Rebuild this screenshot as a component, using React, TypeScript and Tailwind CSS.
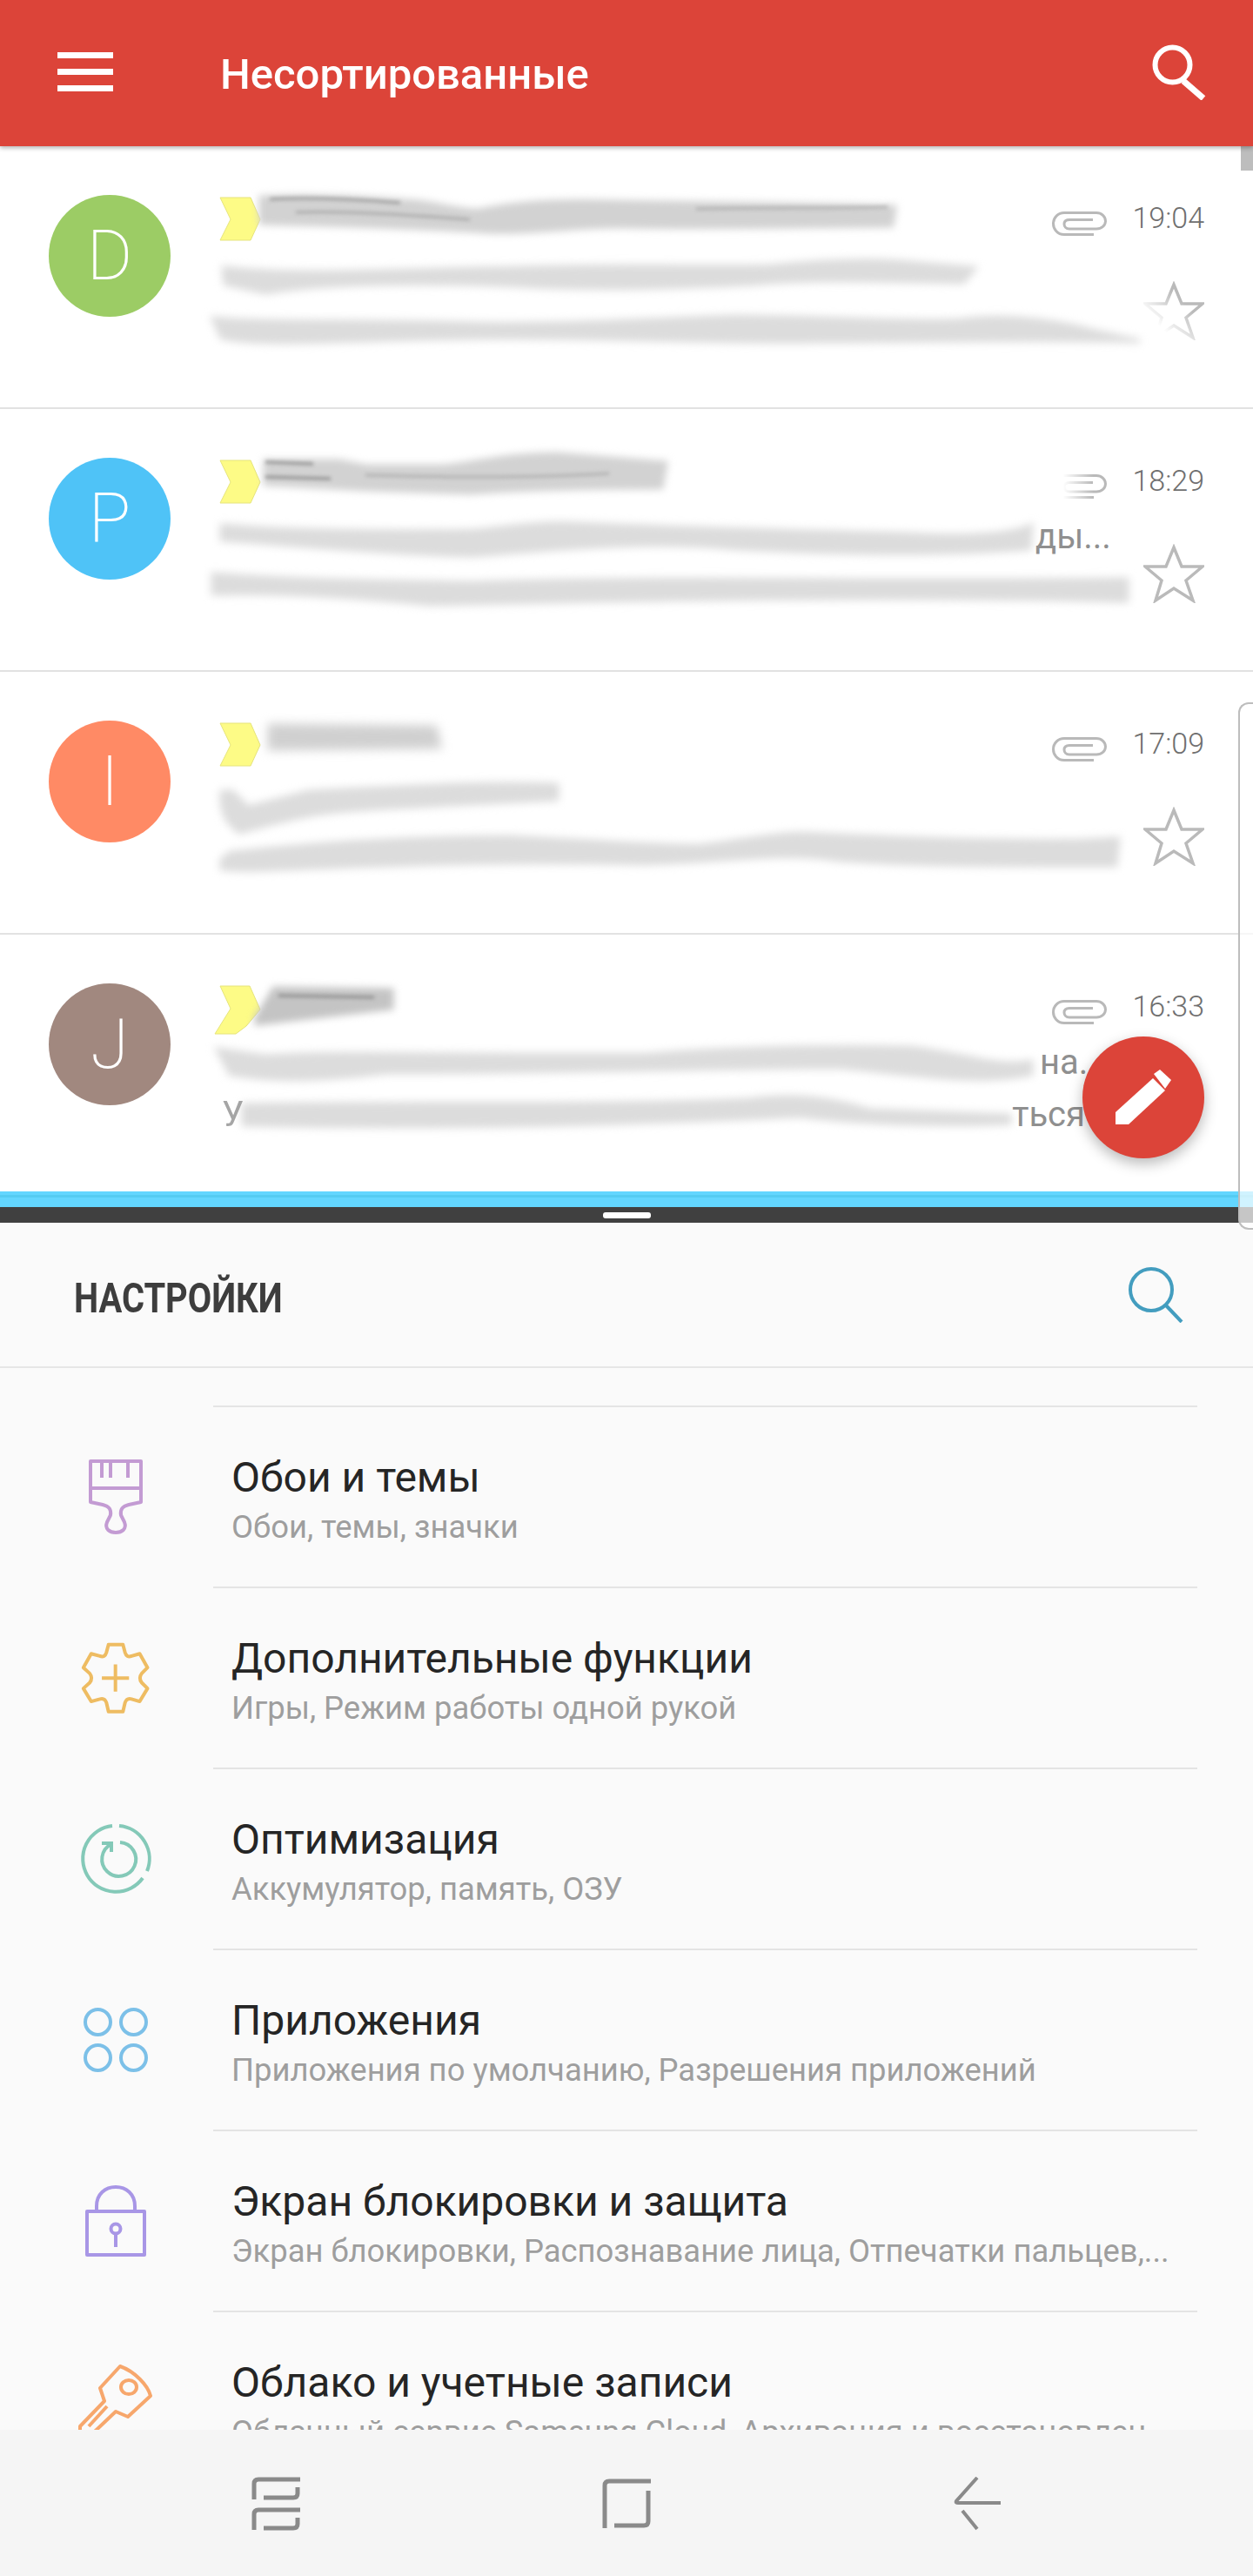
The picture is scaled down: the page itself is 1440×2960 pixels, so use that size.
import type { ReactNode } from 'react';

type Stroke = { d: string; c?: string; w?: number };

function Smudge({ w, h, d, fill = '#dcdcdc', blur = 'blur-[5px]', lines = [] }: { w: number; h: number; d: string; fill?: string; blur?: string; lines?: Stroke[] }) {
  return (
    <svg width={w} height={h} viewBox={`0 0 ${w} ${h}`} className="shrink-0 overflow-visible">
      <path d={d} fill={fill} stroke={fill} strokeWidth="5" className={blur} />
      {lines.map((l, i) => (
        <path key={i} d={l.d} fill="none" stroke={l.c ?? '#a8a8a8'} strokeWidth={l.w ?? 3} className="blur-[2px]" />
      ))}
    </svg>
  );
}

function Flag({ skewed }: { skewed?: boolean }) {
  return (
    <svg width="47" height="58" viewBox="0 0 47 58" className="ml-2 mt-[3px] shrink-0 overflow-visible">
      {skewed ? (
        <path d="M0 0H34L46 27L30 46L18 55L-6 55L12 26Z" fill="#fdfb86" stroke="#e6e47c" strokeWidth="1" />
      ) : (
        <path d="M0 0H35L46 25L35 49H0L12 25Z" fill="#fdfb86" stroke="#e6e47c" strokeWidth="1" />
      )}
    </svg>
  );
}

function Clip({ faded }: { faded?: boolean }) {
  return (
    <svg width="63" height="28" viewBox="0 0 63 28" fill="none" stroke="#b9b9b9" strokeWidth="3" className={faded ? '[mask-image:linear-gradient(to_right,transparent_20%,black_75%)]' : ''}>
      <path d="M48 26.5H14C6 26.5 1.5 20 1.5 14C1.5 7 7 1.5 14 1.5H51C57 1.5 61.5 6 61.5 11C61.5 16 57 20 51 20H20C16 20 14 17 14 14.5C14 11.5 16 9.5 20 9.5H47" />
    </svg>
  );
}

function Star({ faded }: { faded?: boolean }) {
  return (
    <svg width="70" height="68" viewBox="0 0 70 68" fill="none" stroke="#bababa" strokeWidth="3.5" strokeLinejoin="miter" className={faded ? '[mask-image:linear-gradient(to_top_right,transparent_25%,black_65%)]' : ''}>
      <path d="M35 4L44 26L68 26L49 42L57 65L35 51L14 65L21 42L2 26L26 26Z" />
    </svg>
  );
}

function Mail(props: { letter: string; color: string; time: string; line1: ReactNode; line2: ReactNode; line3: ReactNode; noStar?: boolean; fadedClip?: boolean; fadedStar?: boolean; last?: boolean }) {
  return (
    <div className={`flex shrink-0 pl-14 pt-14 ${props.last ? 'h-[295px]' : 'h-[302px] border-b-2 border-[#e2e2e2]'}`}>
      <div className={`flex h-[140px] w-[140px] shrink-0 items-center justify-center rounded-full text-[80px] font-extralight leading-none text-white ${props.color}`}>{props.letter}</div>
      <div className="ml-[49px] flex w-[1139px]">
        <div className="w-[964px] shrink-0">
          <div className="flex h-[70px] items-start">{props.line1}</div>
          <div className="flex h-[60px] items-start">{props.line2}</div>
          <div className="flex h-[60px] items-start">{props.line3}</div>
        </div>
        <div className="relative flex w-[175px] shrink-0 flex-col items-end">
          <div className="mt-[15px] flex h-[32px] w-full items-end justify-between">
            <Clip faded={props.fadedClip} />
            <span className="text-[34px] font-light leading-[34px] text-[#6f6f6f] -translate-y-[4px]">{props.time}</span>
          </div>
          {!props.noStar && <div className="mt-[52px]"><Star faded={props.fadedStar} /></div>}
        </div>
      </div>
    </div>
  );
}

const snippet = 'text-[40px] font-normal leading-[60px] text-[#8f8f8f] -translate-y-[9px] whitespace-nowrap';

function BrushIcon() {
  return (
    <svg width="62" height="86" viewBox="0 0 62 86" fill="none" stroke="#c39bd3" strokeWidth="4" strokeLinejoin="round">
      <path d="M2 2H60V49L46 52C38 54 36 58 37 64L41 72C44 80 38 84 31 84C24 84 18 80 21 72L25 64C26 58 24 54 16 52L2 49Z" />
      <path d="M2 33H60M15 2V21M25 2V21M45 2V21" />
    </svg>
  );
}

function GearIcon() {
  return (
    <svg width="80" height="83" viewBox="100 740 240 250" fill="none" stroke="#eebc62" strokeWidth="12" strokeLinejoin="round">
      <path d="M195 748H245L252 775Q258 795 275 788L303 780L330 828L310 848Q298 864 310 880L330 900L303 945L275 937Q258 932 252 950L245 980H195L188 950Q182 932 165 937L135 945L108 900L130 880Q142 864 130 848L108 828L135 780L165 788Q182 795 188 775Z" />
      <path d="M172 864H266M219 817V911" />
    </svg>
  );
}

function OptimizeIcon() {
  return (
    <svg width="84" height="84" viewBox="-42 -42 84 84" fill="none" stroke="#84c9b8" strokeWidth="4">
      <path d="M4 -38A38 38 0 0 1 36 14" />
      <path d="M31 22A38 38 0 1 1 -4 -38" />
      <path d="M5 -19A19.5 19.5 0 1 1 -5 -17" />
      <path d="M-16 -18H-5V-8" />
    </svg>
  );
}

function AppsIcon() {
  return (
    <svg width="74" height="74" viewBox="0 0 74 74" fill="none" stroke="#7cc0e8" strokeWidth="4">
      <circle cx="16.5" cy="16.5" r="14.5" />
      <circle cx="57.5" cy="16.5" r="14.5" />
      <circle cx="16.5" cy="57.5" r="14.5" />
      <circle cx="57.5" cy="57.5" r="14.5" />
    </svg>
  );
}

function LockIcon() {
  return (
    <svg width="70" height="82" viewBox="0 0 70 82" fill="none" stroke="#a896e6" strokeWidth="4" strokeLinejoin="round">
      <rect x="2" y="30" width="66" height="50" />
      <path d="M13 30V24C13 10 23 2 35 2C47 2 57 10 57 24V30" />
      <circle cx="35" cy="50" r="5.5" />
      <path d="M35 55V71" />
    </svg>
  );
}

function KeyIcon() {
  return (
    <svg width="86" height="88" viewBox="90 2717 86 88" fill="none" stroke="#f7a76c" strokeWidth="4" strokeLinejoin="round">
      <path d="M138 2720L115 2745L120 2760L92 2789V2800L100 2803L113 2791L133 2772L147 2778L173 2754C170 2742 155 2726 138 2720Z" />
      <path d="M123 2766L102 2789" />
      <ellipse cx="148" cy="2744" rx="9" ry="8" />
    </svg>
  );
}

const settings = [
  { icon: <BrushIcon />, title: 'Обои и темы', sub: 'Обои, темы, значки' },
  { icon: <GearIcon />, title: 'Дополнительные функции', sub: 'Игры, Режим работы одной рукой' },
  { icon: <OptimizeIcon />, title: 'Оптимизация', sub: 'Аккумулятор, память, ОЗУ' },
  { icon: <AppsIcon />, title: 'Приложения', sub: 'Приложения по умолчанию, Разрешения приложений' },
  { icon: <LockIcon />, title: 'Экран блокировки и защита', sub: 'Экран блокировки, Распознавание лица, Отпечатки пальцев,...' },
  { icon: <KeyIcon />, title: 'Облако и учетные записи', sub: 'Облачный сервис Samsung Cloud, Архивация и восстановлен' },
];

export default function App() {
  return (
    <div className="relative flex h-[2960px] w-[1440px] flex-col overflow-hidden bg-white font-['Roboto',sans-serif]">
      {/* mail app */}
      <header className="z-10 flex h-[168px] shrink-0 items-start bg-[#dc4439] shadow-[0_2px_5px_rgba(0,0,0,0.3)]">
        <div className="ml-[66px] mt-[60px] flex h-[45px] w-[64px] flex-col justify-between">
          <div className="h-[7px] bg-white" />
          <div className="h-[7px] bg-white" />
          <div className="h-[7px] bg-white" />
        </div>
        <h1 className="ml-[123px] mt-[59px] text-[49px] font-medium leading-[54px] text-white">Несортированные</h1>
        <svg width="64" height="64" viewBox="0 0 64 64" fill="none" stroke="#fff" className="ml-auto mr-[53px] mt-[51px]">
          <circle cx="24.5" cy="23.5" r="20" strokeWidth="6" />
          <path d="M37 42L60 62" strokeWidth="7" />
        </svg>
      </header>

      <div className="relative flex h-[1201px] shrink-0 flex-col overflow-hidden">
        <div className="absolute right-0 top-0 h-[28px] w-[14px] bg-[#bdbdbd]" />
        <Mail
          letter="D"
          color="bg-[#9ccc65]"
          time="19:04"
          fadedStar
          line1={<><Flag /><Smudge w={728} h={50} fill="#d2d2d2" blur="blur-[4px]" d="M0 3C60 0 120 3 180 8C210 12 230 18 250 18C290 10 330 6 400 8C500 10 600 10 728 14L725 35C600 36 500 38 420 36C360 35 320 44 260 42C200 38 120 35 0 32Z" lines={[{ d: 'M10 5C60 2 110 5 160 9', c: '#9a9a9a' }, { d: 'M40 20C100 18 180 24 240 28', c: '#aaaaaa' }, { d: 'M500 16C580 14 650 16 720 14', c: '#b0b0b0' }]} /></>}
          line2={<Smudge w={875} h={44} d="M12 14C100 24 200 16 350 14C480 10 560 14 640 12C700 6 760 4 800 8L875 14L862 30C760 28 680 26 620 32C500 38 420 38 350 34C250 30 130 30 60 42L14 32Z" />}
          line3={<Smudge w={1065} h={44} d="M0 12C60 18 160 14 300 18C400 20 480 14 600 10C700 10 800 18 860 14C900 8 960 12 1010 26L1065 38C950 34 850 38 700 38C550 40 450 32 300 34C150 36 60 44 10 34Z" />}
        />
        <Mail
          letter="P"
          color="bg-[#4fc3f7]"
          time="18:29"
          fadedClip
          line1={<><Flag /><Smudge w={465} h={50} fill="#d2d2d2" blur="blur-[4px]" d="M5 4H90L120 10H210C250 6 280 -4 340 -4L465 6L460 34C380 34 300 36 240 40L120 36L5 30Z" lines={[{ d: 'M5 5L60 7', c: '#8c8c8c' }, { d: 'M5 22L80 24', c: '#8c8c8c' }, { d: 'M120 20C200 22 300 24 400 18', c: '#b0b0b0' }]} /></>}
          line2={<><Smudge w={945} h={44} d="M10 8C80 14 200 16 300 14C340 10 370 4 420 6C500 10 650 14 800 18C870 22 920 18 940 8L938 34C840 42 720 40 600 34C500 24 400 34 300 42C200 40 100 30 10 24Z" /><span className={snippet}>ды...</span></>}
          line3={<Smudge w={1050} h={40} d="M0 4C80 10 150 12 300 14C500 6 800 14 1050 10L1050 34C800 28 500 32 250 38C150 28 60 24 0 26Z" />}
        />
        <Mail
          letter="I"
          color="bg-[#ff8a65]"
          time="17:09"
          line1={<><Flag /><Smudge w={205} h={40} fill="#d0d0d0" blur="blur-[6px]" d="M10 6L200 8L205 30L10 32Z" /></>}
          line2={<Smudge w={395} h={60} d="M10 12C8 40 20 50 30 58L60 50C100 40 120 34 200 30L395 20L395 4C300 0 200 8 110 12L40 30L22 12Z" />}
          line3={<Smudge w={1040} h={44} d="M10 30L20 22C100 14 200 4 340 4C420 8 500 14 560 14C600 10 640 0 680 0C760 4 900 10 1000 8L1040 6L1037 36C900 36 800 36 720 30C660 20 600 30 500 34C400 32 300 32 200 36C100 38 50 44 10 40Z" />}
        />
        <Mail
          letter="J"
          color="bg-[#a1887f]"
          time="16:33"
          noStar
          last
          line1={<><Flag skewed /><Smudge w={150} h={46} fill="#c4c4c4" blur="blur-[4px]" d="M-5 40L15 6L150 8L150 28L80 36L-5 46Z" lines={[{ d: 'M20 14L130 16', c: '#8c8c8c' }]} /></>}
          line2={<><Smudge w={950} h={46} d="M5 6L60 14C150 8 300 14 500 12C600 4 700 2 800 4C860 10 900 28 940 20L940 34C880 46 820 36 720 26C600 26 400 32 200 32C100 44 60 40 20 34Z" /><span className={snippet}>на.</span></>}
          line3={<><span className={`ml-[10px] ${snippet} opacity-80`}>У</span><Smudge w={883} h={40} d="M0 10C200 6 400 12 580 4C640 -4 680 4 720 16L880 22L880 30C800 34 700 30 640 22C500 28 300 38 0 32Z" /><span className={snippet}>ться</span></>}
        />
      </div>

      {/* split divider */}
      <div className="h-[18px] shrink-0 bg-[#63d6ff] pt-1">
        <div className="h-[3px] bg-[#55ccf2]" />
      </div>
      <div className="flex h-[18px] shrink-0 items-center justify-center bg-[#404040]">
        <div className="h-[7px] w-[55px] rounded-[3px] bg-white" />
      </div>

      {/* settings app */}
      <div className="flex h-[167px] shrink-0 items-start border-b-2 border-[#e6e6e6] bg-[#fafafa]">
        <h2 className="ml-[85px] mt-[59px] origin-left scale-x-[0.83] text-[48px] font-bold leading-[56px] text-[#3d3d3d]">НАСТРОЙКИ</h2>
        <svg width="64" height="64" viewBox="0 0 64 64" fill="none" stroke="#439dbf" className="ml-auto mr-[80px] mt-[51px]">
          <circle cx="27" cy="26" r="24" strokeWidth="4" />
          <path d="M44 44L62 63" strokeWidth="4" />
        </svg>
      </div>

      <div className="min-h-0 flex-1 overflow-hidden bg-[#fafafa] pt-[43px]">
        <div className="ml-[245px] h-[2px] w-[1131px] bg-[#e4e4e4]" />
        {settings.map((s) => (
          <div key={s.title}>
            <div className="flex h-[206px] items-center">
              <div className="flex w-[266px] shrink-0 justify-center">{s.icon}</div>
              <div className="whitespace-nowrap pt-[12px]">
                <div className="text-[48px] leading-[53px] text-[#252525]">{s.title}</div>
                <div className="mt-1 text-[36.4px] leading-[53px] text-[#9e9e9e]">{s.sub}</div>
              </div>
            </div>
            <div className="ml-[245px] h-[2px] w-[1131px] bg-[#e4e4e4]" />
          </div>
        ))}
      </div>

      <nav className="z-10 flex h-[168px] shrink-0 items-start justify-center bg-[#f5f5f5] pt-[54px]">
        <div className="flex w-[403px] justify-center">
          <svg width="56" height="62" viewBox="0 0 56 62" fill="none" stroke="#8a8a8a" strokeWidth="5">
            <path d="M3 26V8Q3 3 8 3H56M14 24H48Q53 24 53 19V12M3 61V43Q3 38 8 38H56M14 59H48Q53 59 53 54V47" />
          </svg>
        </div>
        <div className="flex w-[403px] justify-center">
          <svg width="56" height="58" viewBox="0 0 56 58" fill="none" stroke="#8a8a8a" strokeWidth="5" className="mt-[2px]">
            <path d="M3 57V8Q3 3 8 3H56M14 54H48Q53 54 53 49V14" />
          </svg>
        </div>
        <div className="flex w-[403px] justify-center">
          <svg width="54" height="62" viewBox="0 0 54 62" fill="none" stroke="#8a8a8a" strokeWidth="4">
            <path d="M27 1L3 28Q2 30 5 30H54M10 39L27 60" />
          </svg>
        </div>
      </nav>

      {/* compose button */}
      <div className="absolute left-[1244px] top-[1191px] z-20 h-[140px] w-[140px] rounded-full bg-[#dc4439] shadow-[0_6px_16px_rgba(0,0,0,0.28)]">
        <svg width="140" height="140" viewBox="0 0 140 140" fill="#fff">
          <path d="M38 101V87L81 48L95 62L53 101Z" />
          <path d="M82 43L89 38L102 50L95 60Z" />
        </svg>
      </div>

      {/* edge panel handle */}
      <div className="absolute right-0 top-[807px] z-20 h-[606px] w-[17px] rounded-l-[12px] border-2 border-r-0 border-[#bdbdbd] bg-white/70" />
    </div>
  );
}
